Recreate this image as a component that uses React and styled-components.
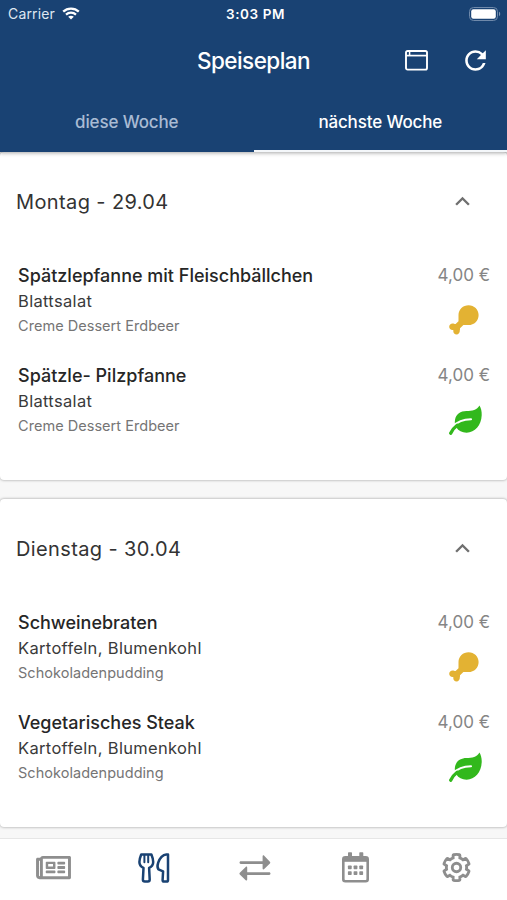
import React, { useState } from 'react'
import styled, { createGlobalStyle } from 'styled-components'
import { FaCog, FaRegNewspaper } from 'react-icons/fa'
import { MdExpandLess, MdRefresh } from 'react-icons/md'

const days = [
  {
    title: 'Montag - 29.04',
    meals: [
      {
        name: 'Spätzlepfanne mit Fleischbällchen',
        side: 'Blattsalat',
        dessert: 'Creme Dessert Erdbeer',
        price: '4,00 €',
        meat: true,
      },
      {
        name: 'Spätzle- Pilzpfanne',
        side: 'Blattsalat',
        dessert: 'Creme Dessert Erdbeer',
        price: '4,00 €',
        meat: false,
      },
    ],
  },
  {
    title: 'Dienstag - 30.04',
    meals: [
      {
        name: 'Schweinebraten',
        side: 'Kartoffeln, Blumenkohl',
        dessert: 'Schokoladenpudding',
        price: '4,00 €',
        meat: true,
      },
      {
        name: 'Vegetarisches Steak',
        side: 'Kartoffeln, Blumenkohl',
        dessert: 'Schokoladenpudding',
        price: '4,00 €',
        meat: false,
      },
    ],
  },
]

const WifiIcon = () => (
  <svg width="18" height="13" viewBox="0 0 18 13" fill="none">
    <path d="M1.2 4.6C5.5 0.5 12.5 0.5 16.8 4.6" stroke="#fff" strokeWidth="2.3" />
    <path d="M4 7.6C6.8 5 11.2 5 14 7.6" stroke="#fff" strokeWidth="2.2" />
    <path d="M9 12.4L6.2 9.7C7.8 8.3 10.2 8.3 11.8 9.7Z" fill="#fff" />
  </svg>
)

const BatteryIcon = () => (
  <svg width="32" height="14" viewBox="0 0 32 14">
    <rect x="0.5" y="0.5" width="28" height="13" rx="4" fill="none" stroke="#6f89aa" />
    <rect x="2.2" y="2.2" width="24.6" height="9.6" rx="2.2" fill="#fff" />
    <path d="M30 4.8C31.6 5.4 31.6 8.6 30 9.2Z" fill="#7e95b3" />
  </svg>
)

const WindowIcon = () => (
  <svg width="23" height="21" viewBox="0 0 23 21" fill="none" stroke="#fff">
    <rect x="1" y="1" width="21" height="18.6" rx="1.6" strokeWidth="1.9" />
    <path d="M1 5.6H22" strokeWidth="1.7" />
    <path d="M4.6 1V5.6" strokeWidth="1.5" />
  </svg>
)

const DrumstickIcon = () => (
  <svg width="30" height="30" viewBox="0 0 30 30" fill="#e3b233">
    <path d="M19.6 0.2C25.2 0.2 29.6 4.5 29.6 9.9C29.6 15.6 25.2 20 19.4 20H14.4L11 23.2C11.1 24 11 24.6 10.8 25.6C11 28 9.4 29.5 7.6 29.5C5.6 29.5 4.3 28.1 4.3 26.2V25H3.5C1.6 25 0.2 23.5 0.2 21.8C0.2 19.9 1.7 18.5 3.6 18.5C4.9 18.5 5.8 19.2 6.6 19L9.5 16.2V10C9.5 4.4 14 0.2 19.6 0.2Z" />
  </svg>
)

const LeafIcon = () => (
  <svg width="33" height="30" viewBox="0 0 33 30" fill="none" strokeLinecap="round">
    <path
      d="M30.4 0.5C32 3 32.9 6.4 32.7 10.3C32.3 20.4 25.8 27.7 17.6 27.7C13 27.7 9.4 26 7.4 22.6C6 20.5 5.5 17.8 6 15C7 9.2 11.6 6.2 17.4 6.1C23 6 28.2 5 30.4 0.5Z"
      fill="#32b81c"
    />
    <path d="M4.2 21.4C8.4 16.6 13.6 14.5 22 14.3" stroke="#fff" strokeWidth="2.1" />
    <path d="M1.7 28.2C3.2 25 5 22.6 8.2 20.2" stroke="#32b81c" strokeWidth="3.3" />
  </svg>
)

const UtensilsIcon = () => (
  <svg
    width="32"
    height="30"
    viewBox="0 0 32 30"
    fill="none"
    stroke="currentColor"
    strokeWidth="2.5"
    strokeLinejoin="round"
    strokeLinecap="round"
  >
    <path d="M3.2 1.4C2.2 3.8 1.4 6.8 1.4 9C1.4 11.8 2.9 13.8 5.5 14.9L4.9 26.6C4.9 27.9 5.6 28.6 6.8 28.6H9.8C11 28.6 11.7 27.9 11.7 26.6L11.1 14.9C13.7 13.8 15.2 11.8 15.2 9C15.2 6.8 14.4 3.8 13.4 1.4Z" />
    <path d="M6.4 2V9.3M10.2 2V9.3" strokeWidth="2" />
    <path d="M28.2 1.4H30V27C30 28 29.5 28.6 28.5 28.6H26.2C25.2 28.6 24.6 28 24.6 27L25.1 18.3L20.4 16.4C19.3 14.6 19.3 12.2 20.2 9.6C21.6 5.4 25 1.4 28.2 1.4Z" />
  </svg>
)

const ExchangeIcon = () => (
  <svg width="32" height="26" viewBox="0 0 32 26" fill="currentColor">
    <path d="M1.8 6.3H23.6V1.3C23.6 0.4 24.5 0 25.2 0.7L30.9 6.7C31.4 7.3 31.4 7.9 30.9 8.5L25.2 14.1C24.5 14.8 23.6 14.4 23.6 13.5V8.9H1.8C0.1 8.9 0.1 6.3 1.8 6.3Z" />
    <path d="M30.2 17.3H8.2V12.4C8.2 11.5 7.4 11.2 6.7 11.9L0.8 17.7C0.3 18.3 0.3 18.9 0.8 19.5L6.7 25.2C7.4 25.9 8.2 25.5 8.2 24.6V19.9H30.2C31.9 19.9 31.9 17.3 30.2 17.3Z" />
  </svg>
)

const CalendarIcon = () => (
  <svg width="27" height="31" viewBox="0 0 27 31">
    <rect x="1.3" y="5.3" width="24.4" height="24" rx="2" fill="none" stroke="currentColor" strokeWidth="2.6" />
    <path d="M1 5H26V9.8H1Z" fill="currentColor" />
    <path d="M6 5V1Q6 0.3 6.7 0.3H9.3Q10 0.3 10 1V5ZM17.3 5V1Q17.3 0.3 18 0.3H20.6Q21.3 0.3 21.3 1V5Z" fill="currentColor" />
    <g fill="currentColor">
      {[5.9, 11.6, 17.3].map((x) =>
        [13.5, 19.2].map((y) => (
          <rect key={`${x}-${y}`} x={x} y={y} width="3.8" height="3.8" rx="0.7" />
        ))
      )}
    </g>
  </svg>
)

const navItems = [
  { id: 'news', icon: <FaRegNewspaper /> },
  { id: 'menu', icon: <UtensilsIcon /> },
  { id: 'exchange', icon: <ExchangeIcon /> },
  { id: 'calendar', icon: <CalendarIcon /> },
  { id: 'settings', icon: <FaCog className="outlined" /> },
]

const Meal = ({ meal }) => (
  <MealRow>
    <MealText>
      <MealName>{meal.name}</MealName>
      <MealSide>{meal.side}</MealSide>
      <MealDessert>{meal.dessert}</MealDessert>
    </MealText>
    <MealInfo>
      <Price>{meal.price}</Price>
      <MealKind>{meal.meat ? <DrumstickIcon /> : <LeafIcon />}</MealKind>
    </MealInfo>
  </MealRow>
)

const App = () => {
  const [week, setWeek] = useState('next')
  const [page, setPage] = useState('menu')

  return (
    <>
      <GlobalStyle />
      <Screen>
        <Header>
          <StatusBar>
            <Carrier>
              Carrier
              <WifiIcon />
            </Carrier>
            <Clock>3:03 PM</Clock>
            <Battery>
              <BatteryIcon />
            </Battery>
          </StatusBar>
          <Toolbar>
            <Title>Speiseplan</Title>
            <Actions>
              <WindowIcon />
              <MdRefresh size={31} />
            </Actions>
          </Toolbar>
          <Tabs>
            <Tab $active={week === 'this'} onClick={() => setWeek('this')}>
              diese Woche
            </Tab>
            <Tab $active={week === 'next'} onClick={() => setWeek('next')}>
              nächste Woche
            </Tab>
          </Tabs>
        </Header>
        <Content>
          {days.map((day) => (
            <Card key={day.title}>
              <CardHeader>
                <span>{day.title}</span>
                <MdExpandLess size={29} />
              </CardHeader>
              {day.meals.map((meal) => (
                <Meal key={meal.name} meal={meal} />
              ))}
            </Card>
          ))}
        </Content>
        <BottomNav>
          {navItems.map(({ id, icon }) => (
            <NavButton key={id} $active={page === id} onClick={() => setPage(id)}>
              {icon}
            </NavButton>
          ))}
        </BottomNav>
      </Screen>
    </>
  )
}

const GlobalStyle = createGlobalStyle`
  * {
    box-sizing: border-box;
  }
  body {
    margin: 0;
    font-family: Inter, 'Liberation Sans', sans-serif;
  }
  svg {
    display: block;
    flex-shrink: 0;
  }
`
const Screen = styled.div`
  display: flex;
  flex-direction: column;
  width: 507px;
  height: 900px;
  overflow: hidden;
  background: #f7f7f7;
`
const Header = styled.header`
  flex-shrink: 0;
  height: 152px;
  z-index: 1;
  background: #194273;
  color: white;
  box-shadow: 0 1px 4px rgba(0, 0, 0, 0.35);
`
const StatusBar = styled.div`
  display: grid;
  grid-template-columns: 1fr auto 1fr;
  align-items: center;
  height: 27px;
  padding: 0 7px 0 8px;
`
const Carrier = styled.div`
  display: flex;
  align-items: center;
  gap: 7px;
  font-size: 14px;
  letter-spacing: 0.15px;
  color: #dfe7f1;
`
const Clock = styled.div`
  font-size: 13.5px;
  font-weight: 600;
  letter-spacing: 0.55px;
  padding-left: 3px;
`
const Battery = styled.div`
  display: flex;
  justify-content: flex-end;
  margin-right: -1px;
`
const Toolbar = styled.div`
  display: grid;
  grid-template-columns: 1fr auto 1fr;
  align-items: center;
  height: 65px;
  padding: 1px 16px 0;
`
const Title = styled.h1`
  grid-column: 2;
  margin: 0;
  font-size: 22.5px;
  font-weight: 500;
  letter-spacing: -0.55px;
`
const Actions = styled.div`
  display: flex;
  align-items: center;
  justify-content: flex-end;
  gap: 32px;
`
const Tabs = styled.div`
  display: flex;
  height: 60px;
`
const Tab = styled.button`
  flex: 1;
  padding: 1px 0 0;
  border: none;
  border-bottom: 2px solid ${({ $active }) => ($active ? '#f4f7fa' : 'transparent')};
  background: none;
  color: ${({ $active }) => ($active ? '#fff' : '#a9bbd3')};
  font-family: inherit;
  font-size: 17px;
  font-weight: 500;
  letter-spacing: -0.15px;
`
const Content = styled.main`
  flex: 1;
  display: flex;
  flex-direction: column;
  gap: 19px;
  min-height: 0;
`
const Card = styled.section`
  flex-shrink: 0;
  height: 328px;
  border-radius: 4px;
  background: white;
  box-shadow: 0 0 3px rgba(0, 0, 0, 0.4);
`
const CardHeader = styled.div`
  display: flex;
  align-items: center;
  justify-content: space-between;
  height: 98px;
  padding: 1px 30px 0 16px;
  color: #333;
  font-size: 20px;
  letter-spacing: 0.38px;

  svg {
    color: #707070;
  }
`
const MealRow = styled.div`
  display: flex;
  justify-content: space-between;
  height: 100px;
  padding: 12px 18px 0;
`
const MealText = styled.div`
  display: flex;
  flex-direction: column;
`
const MealName = styled.div`
  padding-top: 1px;
  color: #262626;
  font-size: 18px;
  font-weight: 500;
  line-height: 25px;
`
const MealSide = styled.div`
  color: #3a3a3a;
  font-size: 16.5px;
  line-height: 26px;
  letter-spacing: 0.33px;
`
const MealDessert = styled.div`
  color: #757575;
  font-size: 14.5px;
  line-height: 23px;
  letter-spacing: 0.04px;
`
const MealInfo = styled.div`
  display: flex;
  flex-direction: column;
  align-items: flex-end;
`
const Price = styled.div`
  margin-right: -1px;
  color: #858585;
  font-size: 17px;
  line-height: 26px;
`
const MealKind = styled.div`
  width: 40px;
  margin-top: 17px;
`
const BottomNav = styled.nav`
  flex-shrink: 0;
  display: flex;
  height: 62px;
  padding: 0 3px 4px 0;
  border-top: 1px solid #e6e6e6;
  background: white;
`
const NavButton = styled.button`
  flex: 1;
  display: flex;
  align-items: center;
  justify-content: center;
  padding: 0 0 0 6px;
  border: none;
  background: none;
  color: ${({ $active }) => ($active ? '#194273' : '#8e8e8e')};
  font-size: 31px;

  &:first-child svg {
    width: 35px;
  }
  .outlined {
    width: 27px;
    height: 27px;
    overflow: visible;
  }
  .outlined path {
    fill: none;
    stroke: currentColor;
    stroke-width: 54;
  }
`
export default App
